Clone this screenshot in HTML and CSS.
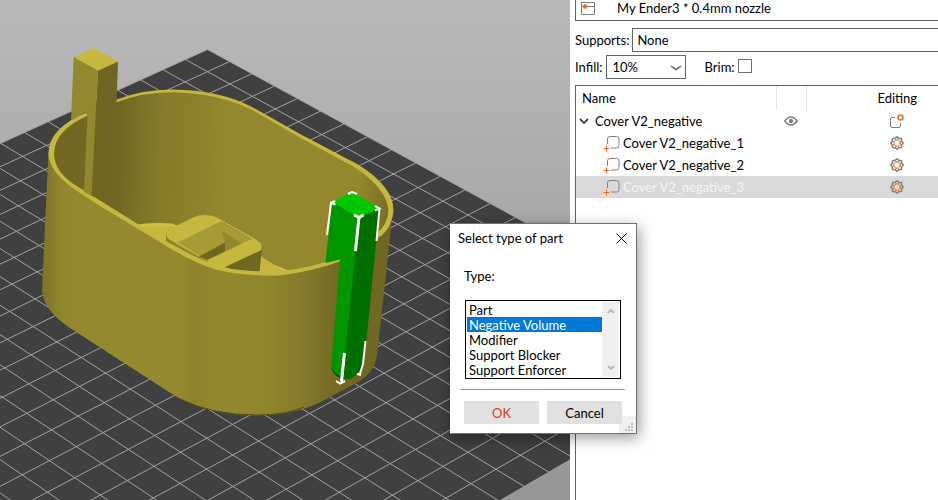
FILE: index.html
```html
<!DOCTYPE html>
<html lang="en">
<head>
<meta charset="utf-8">
<title>Slicer - Select type of part</title>
<link rel="stylesheet" href="styles.css">
</head>
<body>
<svg class="symbols" aria-hidden="true">
  <symbol id="icon-add-part" viewBox="0 0 17 17">
    <path d="M4.500 9V4a2.500 2.500 0 0 1 2.500-2.500h6.500a2.500 2.500 0 0 1 2.500 2.500v6.500a2.500 2.500 0 0 1-2.500 2.500H8" fill="none" stroke="#808080"/>
    <path d="M3.500 10.500v6M.5 13.500h6" fill="none" stroke="#ed6b21"/>
  </symbol>
  <symbol id="icon-gear" viewBox="0 0 14 14">
    <path d="M7 .8 8.900 2.300 11.400 2.600 11.700 5.100 13.200 7 11.700 8.900 11.400 11.400 8.900 11.700 7 13.200 5.100 11.700 2.600 11.400 2.300 8.900.8 7 2.300 5.100 2.600 2.600 5.100 2.300Z" fill="none" stroke="#808080" stroke-width="1.500"/>
    <circle cx="7" cy="7" r="3.300" fill="none" stroke="#ed6b21" stroke-width="1.400" stroke-dasharray="2 .590"/>
  </symbol>
</svg>

<main class="app">
  <section class="viewport" aria-label="3D view">
    <svg class="scene" viewBox="0 0 570 500" preserveAspectRatio="xMinYMin slice" aria-hidden="true">
      <defs>
        <linearGradient id="outer" gradientUnits="userSpaceOnUse" x1="42" y1="0" x2="392" y2="0">
          <stop offset="0" stop-color="#7c7327"/>
          <stop offset=".05" stop-color="#8f852c"/>
          <stop offset=".1" stop-color="#94892e"/>
          <stop offset=".4" stop-color="#94892e"/>
          <stop offset=".43" stop-color="#8e832c"/>
          <stop offset=".5" stop-color="#93882e"/>
          <stop offset=".64" stop-color="#90862d"/>
          <stop offset=".74" stop-color="#857b29"/>
          <stop offset=".86" stop-color="#716823"/>
          <stop offset="1" stop-color="#6f6722"/>
        </linearGradient>
        <linearGradient id="inner" gradientUnits="userSpaceOnUse" x1="90" y1="150" x2="390" y2="163">
          <stop offset="0" stop-color="#6f6722"/>
          <stop offset=".09" stop-color="#6f6722"/>
          <stop offset=".16" stop-color="#7a7125"/>
          <stop offset=".24" stop-color="#867c29"/>
          <stop offset=".38" stop-color="#8d832c"/>
          <stop offset=".44" stop-color="#93882e"/>
          <stop offset=".9" stop-color="#93882e"/>
          <stop offset="1" stop-color="#786f25"/>
        </linearGradient>
      </defs>
      <g id="bed"></g>
      <g class="model">
        <path fill="url(#outer)" d="M48.500 152 42 290Q43 310 70 328L172 394Q206 415 257 415.500 300 415 330 397L360 381Q374 372 377 356L393 210 340 180 90 120Z"/>
        <path fill="none" stroke="#524b18" d="M180 399Q212 415 257 415 285 415 304 407"/>
        <path fill="url(#inner)" d="M115 101Q142 91 172 91 220 92 253 109L350 162Q391 187 390 211 388 230 375 237L340 259Q300 276 250 273 208 266 190 257L90 196Z"/>
        <path fill="#716823" d="M86 114Q54 130 52 152 53 173 76 187L93 197 100 114Z"/>
        <path fill="#cfc145" d="M136 225Q148 222 172 223.500L290 271Q270 275 255 273.500 214 270 188 255Z"/>
        <path fill="#c5b73e" d="M136 227 172 226 262 257 285 272 240 272 188 255Z"/>
        <path fill="#6f6622" d="M262 247 259.500 272.500Q240 272 223 267Z"/>
        <path fill="#887e2a" d="M166 234V241L207 263 210 259Z"/>
        <path fill="#c6b83f" d="M166.500 235Q166 231 173 227.500L193 217.500Q203 213 216 217L256 239.500Q263 244 261.500 249.500 260 251 255 253L223 268Q214 265 207.500 261.500L170 240Q166 237 166.500 235Z"/>
        <path fill="#a79b35" d="M177.500 242.500 220.500 221.500 250.500 239.500 207 260Z"/>
        <path fill="#6f6622" d="M199 256.500 225 242.500V251.500L207 260Z"/>
        <path fill="#93882e" d="M221.500 230.500 242 243.500 225 251.500V242.500Z"/>
        <path fill="none" stroke="#93882e" d="M170 241 206 261.500M221 221.500 252 239.500"/>
        <path fill="#c6b83f" d="M86 112.500Q48 129 48.500 154 49 173 80 193L100 206 163 244Q203 269 230 272.500 258 276.500 280 275.500 314 271 341 261L340 257.500Q310 268 280 271.500 255 272 231 269 205 263 173 246L92 195.500 72 183Q54 170 54 153 55 130 88 115.500Z"/>
        <path fill="#c6b83f" d="M116 99.800Q142 89.500 172 89.500 220 90 253 107.500L300 134 358 164.500Q394 187 393.500 211 391 232 375 239.500V235Q388 225 388.500 210 386 188 355 167.500L300 137.500 253 110.500Q220 93 172 92.200 142 92 116 102.500Z"/>
        <path fill="#6f6622" d="M98 70.500 118 61.500 116 120 112 200 91.500 196Z"/>
        <path fill="#93882e" d="M73.700 57 98 70.500 91.500 196 84 192 87.500 115.500 85 112.500 71 120Z"/>
        <path fill="#c6b83f" d="M73.700 57 94 48 118 61.500 98 70.500Z"/>
        <path fill="#009600" d="M332 202 360 217 346 378 337 375Q331 371 331 368L340 259.500 325.500 263Z"/>
        <path fill="#004d00" d="M331 367Q334 375 346 378L340 378Q332 374 331 367Z"/>
        <path fill="#006f00" d="M359 217 379.500 208 366 345 363 365Q356 379 347 379.500L342 378 346 345Z"/>
        <path fill="#00c800" d="M332 202 351.500 192 379.500 208 359 218Z"/>
        <path class="bracket" d="M327 235 331 203 335.500 204.500M331 203 335 201M348 194 352 192 357 194M375 206 379.500 208.500 375 210.500M379.500 208.500 376.500 241M344.500 353 341.500 382M336 381 340 383.500 345 381M365.500 341 363 364 360 374M357 374 361 375"/>
        <path class="bracket bracket-wide" d="M354 215 359 217.500 363.500 215M359 217 355.500 251M344.500 353 341.500 381"/>
      </g>
    </svg>
  </section>

  <aside class="sidebar">
    <div class="printer">
      <svg class="printer-icon" width="14" height="14" viewBox="0 0 14 14" aria-hidden="true">
        <path d="M.5.500h13v12H.5zM1 4.500h12" fill="none" stroke="#808080"/>
        <circle cx="4" cy="4.500" r="2.200" fill="#ed6b21"/>
      </svg>
      <select class="printer-select" aria-label="Printer">
        <option>My Ender3 * 0.4mm nozzle</option>
      </select>
    </div>

    <div class="setting">
      <label for="supports">Supports:</label>
      <select id="supports" class="combo combo-fill"><option>None</option></select>
    </div>

    <div class="setting">
      <label for="infill">Infill:</label>
      <span class="infill">
        <select id="infill" class="combo"><option>10%</option></select>
        <svg class="chevron" width="12" height="6" viewBox="0 0 12 6" aria-hidden="true"><path d="m1 1 5 3.500L11 1" fill="none" stroke="#606060" stroke-width="1.500"/></svg>
      </span>
      <label class="brim-label" for="brim">Brim:</label>
      <input id="brim" class="check" type="checkbox">
    </div>

    <div class="objects">
      <table class="object-table">
        <thead>
          <tr><th class="col-name" scope="col">Name</th><th class="col-eye" scope="col" aria-label="Visible"></th><th class="col-edit" scope="col">Editing</th></tr>
        </thead>
        <tbody>
          <tr>
            <td><span class="item item-root">
              <svg width="10" height="7" viewBox="0 0 10 7" aria-hidden="true"><path d="m1 1 4 4 4-4" fill="none" stroke="#444" stroke-width="1.800"/></svg>
              Cover V2_negative</span></td>
            <td class="center"><svg width="14" height="10" viewBox="0 0 14 10" aria-hidden="true"><path d="M.8 5Q7-3 13.200 5 7 13 .8 5Z" fill="none" stroke="#808080" stroke-width="1.500"/><circle cx="7" cy="5" r="2.200" fill="#808080"/></svg></td>
            <td class="edit"><svg width="14" height="14" viewBox="0 0 14 14" aria-hidden="true"><path d="M5 3.500H2A1.500 1.500 0 0 0 .5 5v7A1.500 1.500 0 0 0 2 13.500h7A1.500 1.500 0 0 0 10.500 12V9" fill="none" stroke="#808080"/><circle cx="10.500" cy="3.500" r="2.500" fill="none" stroke="#ed6b21" stroke-width="1.600"/></svg></td>
          </tr>
          <tr>
            <td><span class="item"><svg width="17" height="17" aria-hidden="true"><use href="#icon-add-part"/></svg>Cover V2_negative_1</span></td>
            <td></td>
            <td class="edit"><svg width="14" height="14" aria-hidden="true"><use href="#icon-gear"/></svg></td>
          </tr>
          <tr>
            <td><span class="item"><svg width="17" height="17" aria-hidden="true"><use href="#icon-add-part"/></svg>Cover V2_negative_2</span></td>
            <td></td>
            <td class="edit"><svg width="14" height="14" aria-hidden="true"><use href="#icon-gear"/></svg></td>
          </tr>
          <tr class="selected">
            <td><span class="item"><svg width="17" height="17" aria-hidden="true"><use href="#icon-add-part"/></svg>Cover V2_negative_3</span></td>
            <td></td>
            <td class="edit"><svg width="14" height="14" aria-hidden="true"><use href="#icon-gear"/></svg></td>
          </tr>
        </tbody>
      </table>
    </div>
  </aside>

  <form class="dialog" role="dialog" aria-labelledby="dialog-title">
    <header class="dialog-head">
      <span id="dialog-title">Select type of part</span>
      <button class="close" type="button" aria-label="Close"><svg width="11" height="11" viewBox="0 0 11 11" aria-hidden="true"><path d="m.5.500 10 10m0-10-10 10" stroke="#000" fill="none"/></svg></button>
    </header>
    <label class="type-label" for="type">Type:</label>
    <div class="listbox">
      <select id="type" class="type-list" size="5">
        <option>Part</option>
        <option selected>Negative Volume</option>
        <option>Modifier</option>
        <option>Support Blocker</option>
        <option>Support Enforcer</option>
      </select>
      <div class="scrollbar" aria-hidden="true">
        <svg width="8" height="6" viewBox="0 0 8 6"><path d="m1 5 3-3 3 3" fill="none" stroke="#bbb" stroke-width="2"/></svg>
        <svg width="8" height="6" viewBox="0 0 8 6"><path d="m1 1 3 3 3-3" fill="none" stroke="#bbb" stroke-width="2"/></svg>
      </div>
    </div>
    <div class="actions">
      <button class="button button-ok" type="button">OK</button>
      <button class="button" type="button">Cancel</button>
    </div>
    <svg class="grip" width="17" height="17" viewBox="0 0 17 17" aria-hidden="true"><path d="M0 0h17v17H0z" fill="#f0f0f0"/><path d="M12 7h2v2h-2zM9 10h2v2H9zM12 10h2v2h-2zM6 13h2v2H6zM9 13h2v2H9zM12 13h2v2h-2z" fill="#bdbdbd"/></svg>
  </form>
</main>
<script src="bed.js"></script>
</body>
</html>
```
FILE: styles.css
```css
* {
  box-sizing: border-box;
}

body {
  margin: 0;
  font: 13px/16px Lato, "Noto Sans", sans-serif;
  color: #000;
  background: #fff;
}

select,
button {
  font: inherit;
  color: inherit;
}

.symbols {
  display: none;
}

.app {
  position: relative;
  display: grid;
  grid-template-columns: minmax(0, 1fr) 368px;
  height: 100vh;
  overflow: hidden;
}

.viewport {
  overflow: hidden;
  background: linear-gradient(#b9b9b9, #959595);
}

.scene {
  display: block;
  width: 100%;
  height: 100%;
}

.bed-plate {
  fill: #404040;
}

.bed-lines {
  fill: none;
  stroke: #a3a3a3;
}

.bracket {
  fill: none;
  stroke: #fff;
  stroke-width: 2;
}

.bracket-wide {
  stroke-width: 3;
}

.sidebar {
  display: flex;
  flex-direction: column;
  padding-left: 5px;
  overflow: hidden;
}

.printer {
  display: flex;
  align-items: center;
  height: 21px;
  padding-left: 5px;
  border: solid #646464;
  border-width: 0 0 1px 1px;
}

.printer-icon {
  margin-bottom: 2px;
}

.printer-select {
  flex: 1;
  appearance: none;
  height: 20px;
  padding: 0 0 4px 22px;
  border: 0;
  background: none;
}

.setting {
  display: flex;
  align-items: center;
  gap: 3px;
  height: 24px;
}

.printer + .setting {
  margin: 7px 0 3px;
}

.combo {
  appearance: none;
  height: 24px;
  padding: 0 4px;
  border: 1px solid #646464;
  border-radius: 0;
  background: #fff;
}

.combo-fill {
  flex: 1;
  border-right: 0;
}

.infill {
  position: relative;
}

.infill .combo {
  width: 80px;
  padding: 0 6px;
}

.chevron {
  position: absolute;
  right: 4px;
  top: 10px;
}

.brim-label {
  margin-left: 16px;
}

.check {
  appearance: none;
  width: 14px;
  height: 14px;
  margin: 0 0 2px;
  border: 1px solid #707070;
  background: #fff;
}

.objects {
  flex: 1;
  margin-top: 6px;
  border: solid #646464;
  border-width: 1px 0 0 1px;
}

.object-table {
  width: 100%;
  table-layout: fixed;
  border-collapse: collapse;
}

.object-table th,
.object-table td {
  height: 22px;
  padding: 0;
  text-align: left;
  font-weight: 400;
}

.object-table th {
  height: 24px;
  border-right: 1px solid #e5e5e5;
}

.object-table .col-name {
  width: 200px;
  padding-left: 6px;
}

.object-table .col-eye {
  width: 30px;
}

.object-table .col-edit,
.object-table .edit {
  padding-left: 50px;
  text-align: center;
  border: 0;
}

.object-table .center {
  text-align: center;
}

.object-table svg {
  display: block;
}

.center svg,
.edit svg {
  margin: 0 auto;
}

.item {
  display: flex;
  align-items: center;
  gap: 3px;
  padding-left: 27px;
}

.item-root {
  gap: 6px;
  padding-left: 3px;
}

.selected {
  color: #f5f5f5;
  background: #d9d9d9;
}

.dialog {
  position: absolute;
  left: 450px;
  top: 223px;
  width: 187px;
  padding: 6px 11px 9px 13px;
  border: 1px solid #707070;
  border-left-color: #fff;
  background: #fff;
  box-shadow: 2px 4px 14px rgba(0, 0, 0, 0.4);
}

.dialog-head {
  display: flex;
  align-items: center;
  justify-content: space-between;
  margin-left: -6px;
}

.close {
  display: flex;
  padding: 2px 0;
  border: 0;
  background: none;
  margin-right: -2px;
}

.type-label {
  display: block;
  margin-top: 22px;
}

.listbox {
  display: flex;
  margin: 16px 4px 0 1px;
  padding: 1px;
  border: 1px solid #000;
}

.type-list {
  flex: 1;
  height: 75px;
  padding: 0;
  border: 0;
  border-radius: 0;
  outline: 0;
  overflow: hidden;
  background: #fff;
  scrollbar-width: none;
}

.type-list option {
  min-height: 15px;
  height: 15px;
  padding: 0 2px;
  line-height: 15px;
}

.type-list option:checked {
  color: #fff;
  background: #0078d7 linear-gradient(#0078d7, #0078d7);
}

.scrollbar {
  display: flex;
  flex-direction: column;
  align-items: center;
  justify-content: space-between;
  width: 17px;
  padding: 6px 0;
  background: #f0f0f0;
}

.actions {
  display: flex;
  gap: 8px;
  margin: 10px 0 0 -4px;
  padding-top: 11px;
  border-top: 1px solid #a0a0a0;
  padding-left: 4px;
}

.button {
  position: relative;
  z-index: 1;
  width: 75px;
  height: 23px;
  padding: 0;
  border: 0;
  background: #e1e1e1;
}

.button-ok {
  color: #dc3c14;
}

.grip {
  position: absolute;
  right: 0;
  bottom: 0;
}
```
FILE: bed.js
```javascript
// Print bed of 22 x 22 cells, projected in perspective onto the scene.
const CELLS = 22;

function project(i, j) {
  const w = 1 - 0.005596 * i - 0.004573 * j;
  const x = (207.5 + 20.822 * i - 22.981 * j) / w;
  const y = (49.5 + 11.692 * i + 9.767 * j) / w;
  return x.toFixed(1) + " " + y.toFixed(1);
}

let lines = "";
for (let n = 0; n <= CELLS; n++) {
  lines += "M" + project(n, 0) + "L" + project(n, CELLS);
  lines += "M" + project(0, n) + "L" + project(CELLS, n);
}

const corners = [project(0, 0), project(CELLS, 0), project(CELLS, CELLS), project(0, CELLS)];
document.getElementById("bed").innerHTML =
  '<path class="bed-plate" d="M' + corners.join("L") + 'Z"/>' +
  '<path class="bed-lines" d="' + lines + '"/>';
```
